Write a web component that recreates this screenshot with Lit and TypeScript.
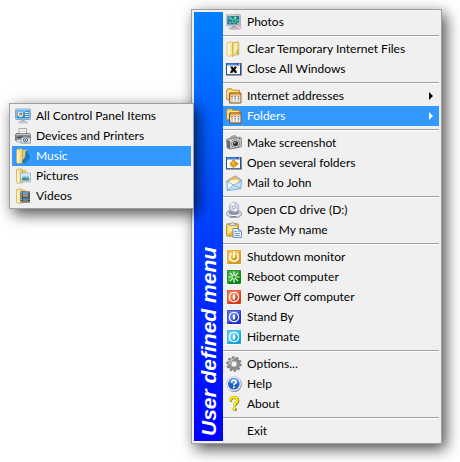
import { LitElement, html, svg, css, nothing, type TemplateResult, type SVGTemplateResult } from "lit";
import { customElement, property } from "lit/decorators.js";
import { classMap } from "lit/directives/class-map.js";

const powerTile = (light: string, dark: string, glyph: SVGTemplateResult) => svg`
  <rect x="0.5" y="0.5" width="15" height="15" rx="1.5" fill="#ffffff"/>
  <rect x="1" y="1" width="14" height="14" rx="1" fill=${dark}/>
  <path d="M1.5 2q0-.5.5-.5h12.5L1.5 14z" fill=${light}/>
  <path d="M14.5 1.5L1.5 14.5h1L14.5 5z" fill=${light} opacity=".55"/>
  ${glyph}`;

const zeroGlyph = svg`
  <circle cx="8" cy="8" r="4.6" fill="none" stroke="#fff" stroke-width="1.4"/>
  <rect x="7" y="5.5" width="2" height="5" rx="1" fill="#fff" stroke="#fff" stroke-width=".4"/>`;

const folderBody = svg`
  <path d="M1.500 1.500l5-.8 1 1v13l-5 .8-1-1.500z" fill="#f0d98c" stroke="#d0ae55" stroke-width=".7"/>
  <path d="M2 2l2.500.8v12.400L2 14z" fill="#fff0b8"/>
  <path d="M7.300 2.200l4.200-.4v3l-4.200 9.500z" fill="#e8cb70"/>
  <path d="M7.500 1.500v13.200" stroke="#b8923a" stroke-width=".6"/>`;

const menuFolder = svg`
  <path d="M.7 11V2.200L1.500.8h4.200l1 1.400h6.800v3H3.200V12H1.500z" fill="#f8d568" stroke="#b07a18" stroke-width=".8"/>
  <path d="M1.500 3.200h11.300v1H2.800v6.500H1.500z" fill="#ffeaa0"/>
  <path d="M3.200 5.600q0-1 1-1h10q1.200 0 1.200 1v8.800q0 1-1 1H4.200q-1 0-1-1z" fill="#7a4a14"/>
  <path d="M4 6q0-.7.7-.7H14q.7 0 .7.700v1.200H4z" fill="#e9a63c"/>
  <path d="M4.200 7.300h10.300v7.200H4.200z" fill="#fbf6e8"/>
  <path d="M5.200 8h1.600v1.400H5.200z" fill="#c55a3a"/>
  <path d="M8.400 8H10v1.400H8.400z" fill="#5f88c8"/>
  <path d="M11.700 8h1.600v1.400h-1.600z" fill="#d65a48"/>
  <path d="M5.200 10.200h1.600v1.400H5.200z" fill="#e08a70"/>
  <path d="M8.400 10.200H10v1.400H8.400z" fill="#48a058"/>
  <path d="M11.700 10.200h1.600v1.400h-1.600z" fill="#4878c8"/>
  <path d="M5.200 12.400h1.600v1.400H5.200zM8.400 12.400H10v1.400H8.400zM11.700 12.400h1.600v1.400h-1.600z" fill="#a9a9a0"/>`;

const windowFrame = svg`
  <rect x="0" y="2" width="16" height="12.800" fill="#8c8c88"/>
  <rect x="0" y="2" width="15" height="12" fill="#1c4c9c"/>
  <rect x="1" y="2.600" width="10" height="1.200" fill="#5b9cf0"/>
  <rect x="12.600" y="2.600" width="1.600" height="1.200" fill="#e8edf8"/>
  <rect x="1" y="4.400" width="13" height="8.800" fill="#fffef6"/>`;

const icons: Record<string, SVGTemplateResult> = {
  photos: svg`
    <path d="M0 1l13.500-.6q1 0 1 1v10.400H.8Q0 11.800 0 11z" fill="#d9dcdc" stroke="#969c9c" stroke-width=".7"/>
    <path d="M1.300 2.200l12-.4v8.800h-12z" fill="#26758c"/>
    <path d="M1.300 2.200h4L1.300 7z" fill="#5b9dbc"/>
    <circle cx="5" cy="4.500" r="1.500" fill="#4ac69e"/><circle cx="9.300" cy="3.700" r="1.300" fill="#8ee8c8"/>
    <circle cx="8" cy="7.200" r="1.800" fill="none" stroke="#5bdcb0" stroke-width="1"/>
    <circle cx="11.500" cy="6.200" r="1.300" fill="#3fb67e"/><circle cx="4" cy="8.500" r="1" fill="#79d8f0"/>
    <circle cx="12" cy="9.300" r=".9" fill="#a0f0a8"/>
    <path d="M6 12h4l.5 1.700h-5z" fill="#a4a8a8"/>
    <path d="M3.300 14q4.500-1 9 0v1q-4.500.8-9 0z" fill="#c8cccc" stroke="#8c9090" stroke-width=".5"/>
    <path d="M13.500 11.500l1.800 2-1.800 2-2-2z" fill="#f5c8f4" stroke="#e07ae0" stroke-width=".7"/>`,
  folder: svg`
    <path d="M1 2l4.500-1.400L7 2v12.500l-5 .8-1-1.300z" fill="#f6e6a6" stroke="#d8bb62" stroke-width=".7"/>
    <path d="M2 2.600l1.600-.4v12l-1.600.2z" fill="#fffbe0"/>
    <path d="M6.500 1.800l5.700-1q.6 0 .6.800v11l-6.300 2.800z" fill="#ecd37c" stroke="#cba94e" stroke-width=".7"/>
    <path d="M8 2.600l3-.5v7L8 13z" fill="#f9eaae"/>
    <path d="M10.800 8.500l2.200-1v5.800l-2.200 1z" fill="#d8b24a"/>
    <path d="M12.500 11.500v3" stroke="#72b8cc" stroke-width=".8"/>`,
  closeWin: svg`${windowFrame}
    <path d="M4.500 5.500h2l1 1.500 1-1.500h2v1.200L9.200 8.600l1.500 2v1.400h-2l-1.200-1.700L6.300 12h-2v-1.400l1.500-2-1.300-1.900z" fill="#101010"/>`,
  menuFolder,
  camera: svg`
    <path d="M4 3.500L5.500 1.200l4-.6 1.500 2z" fill="#b8b8b8" stroke="#707070" stroke-width=".6"/>
    <path d="M.6 5.200q0-1.200 1-1.400l12-1.600q1.700-.1 1.800 1.300l.2 7.300q0 1-1 1.300L4 14.200 1 12.800z" fill="#bcbcbc" stroke="#727272" stroke-width=".7"/>
    <path d="M1 5l3 .9v8L1.200 12.500z" fill="#686868"/>
    <path d="M4 5.600l10.500-1.800v1.500L4 7z" fill="#e8e8e8"/>
    <circle cx="9.500" cy="8.600" r="4" fill="#e2e2e2" stroke="#5c5c5c" stroke-width=".7"/>
    <circle cx="9.500" cy="8.600" r="2.600" fill="#303030"/>
    <circle cx="8.800" cy="7.800" r=".9" fill="#b0b8c4"/>
    <rect x="12.500" y="3.200" width="1.800" height="1.200" fill="#555"/>`,
  severalWin: svg`${windowFrame}
    <path d="M6.500 5h2v2.600h1V6.500l3 2.200-1.200 1-1.200-.7.4 1.600-3 2-3-2.200 1.200-.8-2-1.200 1.800-1.500 1 .8z" fill="#e8a21c" stroke="#a86408" stroke-width=".5"/>
    <path d="M7.200 5.500v3.800" stroke="#ffe27c" stroke-width=".8"/>`,
  mail: svg`
    <path d="M.8 6L9 .8 15.500 5l-.8 8.500L1.300 15.600z" fill="#8cb4e0" stroke="#6a94c4" stroke-width=".7"/>
    <path d="M2 5.700L8.800 1.300l5.800 3.900L9.200 10z" fill="#f8b850"/>
    <path d="M4 5.700l6.500-1.400 3 1.200L9 10 3 7.500z" fill="#fff6d8"/>
    <path d="M1 6.500l6.500 3.700L15.400 6l-.7 7.500L1.500 15.500z" fill="#c3e3f8" stroke="#7ba8d4" stroke-width=".6"/>
    <path d="M1.500 15.300l5.800-5 7.300 3" fill="none" stroke="#74a8d8" stroke-width=".8"/>
    <path d="M2 14l4.500-4L2 7.500z" fill="#eaf7ff"/>`,
  cd: svg`
    <path d="M.6 10.500L4 8h8.500l3 2.800v2.400L12 15.500H4l-3.400-2.800z" fill="#c4c6d0" stroke="#858894" stroke-width=".7"/>
    <path d="M1 11l3.500 2.500h7.600L15 11.300" fill="none" stroke="#fafafa" stroke-width="1"/>
    <ellipse cx="7.800" cy="10.600" rx="5" ry="2.300" fill="#8e92a4"/>
    <circle cx="8" cy="5.200" r="4.700" fill="#d4d8ec" stroke="#8a90a8" stroke-width=".7"/>
    <path d="M8 5.200L4.500 2.200A4.500 4.500 0 0 1 8 .7z" fill="#fff"/>
    <path d="M8 5.200l3.500 3A4.500 4.500 0 0 1 8 9.700z" fill="#f4f6ff"/>
    <circle cx="8" cy="5.200" r="1.500" fill="#f5f5f5" stroke="#7c84a0" stroke-width=".6"/>
    <path d="M5 14.500h5" stroke="#626678" stroke-width=".7"/>`,
  paste: svg`
    <path d="M.6 2.800q0-1 1-1h9.800q1 0 1 1v10.400q0 1-1 1H1.600q-1 0-1-1z" fill="#eeb82e" stroke="#a87c1c" stroke-width=".8"/>
    <path d="M1.500 3h9v2.500l-9 7z" fill="#ffe48a"/>
    <path d="M3.500 3.500V2l1.500-.5Q5.300.4 6.500.4t1.500 1.100l1.500.5v1.500z" fill="#d8dce4" stroke="#707888" stroke-width=".6"/>
    <path d="M7 6.500h5.500l3 2.800v6.200H7z" fill="#f2f7ff" stroke="#4a78c0" stroke-width=".8"/>
    <path d="M12.500 6.500v2.800h3" fill="#b4cff4" stroke="#4a78c0" stroke-width=".6"/>
    <path d="M8.500 9.500h2.800M8.500 11.500h5.300M8.500 13.500h5.300" stroke="#5b87cc" stroke-width=".9"/>`,
  shutdown: powerTile("#efc24a", "#d39a1c", svg`
    <path d="M5.300 4.700a4.300 4.300 0 1 0 5.400 0" fill="none" stroke="#fff" stroke-width="1.500" stroke-linecap="round"/>
    <path d="M8 2.800v5.400" stroke="#fff" stroke-width="1.600" stroke-linecap="round"/>`),
  reboot: powerTile("#3fae3c", "#0c8412", svg`
    <path d="M8 2.800v3.400M8 9.800v3.400M2.800 8h3.400M9.800 8h3.400M4.300 4.300l2.400 2.400M9.300 9.300l2.400 2.400M11.700 4.300L9.300 6.700M6.700 9.300l-2.400 2.400" stroke="#f0fff0" stroke-width="1.200" stroke-linecap="round"/>`),
  poweroff: powerTile("#f47a54", "#da3a16", zeroGlyph),
  standby: powerTile("#5a72ee", "#1c2ecc", zeroGlyph),
  hibernate: powerTile("#5ccdf4", "#12a2da", zeroGlyph),
  gear: svg`
    <circle cx="8" cy="8" r="6.700" fill="none" stroke="#777" stroke-width="2" stroke-dasharray="2.300 1.900"/>
    <circle cx="8" cy="8" r="4.900" fill="none" stroke="#8c8c8c" stroke-width="3.200"/>
    <path d="M3.200 8A4.800 4.800 0 0 1 8 3.200" fill="none" stroke="#bdbdbd" stroke-width="1.800"/>
    <circle cx="8" cy="8" r="3.100" fill="#f4f4f4" stroke="#6a6a6a" stroke-width=".6"/>`,
  help: svg`
    <circle cx="8.400" cy="8.500" r="7.400" fill="#7c8698"/>
    <circle cx="7.800" cy="7.800" r="7.300" fill="#eef4fc" stroke="#a0b0c6" stroke-width=".5"/>
    <circle cx="7.800" cy="7.800" r="5.800" fill="#1f5fc4"/>
    <path d="M2.600 6.500a5.300 5.300 0 0 1 10.400 0Q8 9.500 2.600 6.500z" fill="#5592e6"/>
    <path d="M5.700 6.300q0-2.200 2.200-2.200T10 6q0 1-1.100 1.700-1 .6-1 1.500" fill="none" stroke="#fff" stroke-width="1.600"/>
    <circle cx="7.900" cy="11.200" r="1" fill="#fff"/>`,
  about: svg`
    <path d="M4.900 5.800Q4.700 2 8.400 1.900t3.900 3q0 1.500-1.700 2.700-1.400 1-1.300 2.900" fill="none" stroke="#707070" stroke-width="2.200"/>
    <rect x="8" y="12.300" width="2.800" height="2.800" rx="1" fill="#707070"/>
    <path d="M4.200 5.300Q4 1.500 7.700 1.400t3.800 3q0 1.500-1.700 2.700-1.400 1-1.300 2.900" fill="none" stroke="#b89a00" stroke-width="2.600"/>
    <path d="M4.200 5.300Q4 1.500 7.700 1.400t3.800 3q0 1.500-1.700 2.700-1.400 1-1.300 2.900" fill="none" stroke="#fff200" stroke-width="1.800"/>
    <circle cx="8.300" cy="13" r="1.600" fill="#fff200" stroke="#b89a00" stroke-width=".5"/>`,
  panel: svg`
    <rect x=".5" y="1" width="15" height="10.500" rx="1" fill="#d9eaf8" stroke="#6c94b8" stroke-width=".8"/>
    <rect x="1.500" y="2" width="13" height="8.500" fill="#2f8ad0"/>
    <path d="M1.500 2h13L1.500 8z" fill="#6cb6ec"/>
    <circle cx="5.500" cy="6.300" r="2.600" fill="#fff"/>
    <circle cx="5.500" cy="6.300" r="1.800" fill="#f29a2e"/>
    <path d="M5.500 6.300V4.500a1.800 1.800 0 0 1 1.800 1.800z" fill="#2a6cb8"/>
    <path d="M10 4.500h3.500M10 6.500h3.500M10 8.500h3.500" stroke="#fff" stroke-width="1"/>
    <path d="M6.500 11.500h3l.5 2H6z" fill="#a8b4c0"/>
    <path d="M4 13.500h8.500v1.500H4z" fill="#d6dce4" stroke="#98a4b0" stroke-width=".5"/>`,
  printer: svg`
    <path d="M4 .5h7.500V6H4z" fill="#fff" stroke="#8c8c8c" stroke-width=".7"/>
    <path d="M5 2h5.500M5 3.500h5.500" stroke="#c8ccd0" stroke-width=".7"/>
    <path d="M.6 7q0-1.500 1.500-1.500h11.500q1.700 0 1.700 1.500v5.500H.6z" fill="#84888c" stroke="#505458" stroke-width=".7"/>
    <path d="M1.200 7q4-1.500 13.400-.3" fill="none" stroke="#e0e2e4" stroke-width="1"/>
    <path d="M2.500 8.700h10v1.300h-10z" fill="#3c4044"/>
    <path d="M1.500 11.500h5v3l-5-.8z" fill="#e6e8ea" stroke="#888" stroke-width=".5"/>
    <path d="M6 9.800h2l.6-1.200h3.200l.6 1.200h2.900v5.400H6z" fill="#dfe5ea" stroke="#6c7880" stroke-width=".6"/>
    <circle cx="10.500" cy="12" r="2.100" fill="#f8fafc" stroke="#384858" stroke-width=".8"/>
    <circle cx="10.500" cy="12" r="1" fill="#2c6aa4"/>`,
  music: svg`${folderBody}
    <path d="M10.800 3.500v7.600q-1-.4-2.200.4-1.400 1.200-.8 2.600.9 1.300 2.700.5 1.700-.9 1.600-2.600V7.700q1.800 1.200 1.300 3.900 2.100-2.900.1-5.100-1.300-1.200-1.400-3z" fill="#1c80bc" stroke="#0f5c8c" stroke-width=".5"/>`,
  pictures: svg`${folderBody}
    <rect x="5.500" y="5" width="10" height="8.800" fill="#fff" stroke="#8e9aa4" stroke-width=".7"/>
    <rect x="6.700" y="6.200" width="7.600" height="6.300" fill="#8cc8ee"/>
    <path d="M6.700 12.500v-2l2.500-1.800 2 1.500 1.500-.8 1.600 1.400v1.700z" fill="#4c8c7c"/>
    <path d="M6.700 6.200h7.600v1.500l-7.600 1z" fill="#c8e8fa"/>`,
  videos: svg`${folderBody}
    <rect x="5.500" y="3.500" width="9.500" height="11" fill="#343a42"/>
    <rect x="7.500" y="4" width="5.500" height="4.700" fill="#58a0d4"/>
    <path d="M7.500 8.700l2.500-3 3 2v1z" fill="#d08830"/>
    <rect x="7.500" y="9.600" width="5.500" height="4.500" fill="#4488c0"/>
    <path d="M7.500 14.100l3-3 2.500 1.800v1.200z" fill="#a07838"/>
    <path d="M6.500 4.200v10M14 4.200v10" stroke="#dfe5ea" stroke-width=".9" stroke-dasharray="1.100 1.100"/>`,
};

interface Entry {
  label: string;
  icon?: string;
  children?: Entry[];
  arrow?: boolean;
  active?: boolean;
}

const groups: Entry[][] = [
  [{ label: "Photos", icon: "photos" }],
  [
    { label: "Clear Temporary Internet Files", icon: "folder" },
    { label: "Close All Windows", icon: "closeWin" },
  ],
  [
    { label: "Internet addresses", icon: "menuFolder", arrow: true },
    {
      label: "Folders",
      icon: "menuFolder",
      arrow: true,
      active: true,
      children: [
        { label: "All Control Panel Items", icon: "panel" },
        { label: "Devices and Printers", icon: "printer" },
        { label: "Music", icon: "music", active: true },
        { label: "Pictures", icon: "pictures" },
        { label: "Videos", icon: "videos" },
      ],
    },
  ],
  [
    { label: "Make screenshot", icon: "camera" },
    { label: "Open several folders", icon: "severalWin" },
    { label: "Mail to John", icon: "mail" },
  ],
  [
    { label: "Open CD drive (D:)", icon: "cd" },
    { label: "Paste My name", icon: "paste" },
  ],
  [
    { label: "Shutdown monitor", icon: "shutdown" },
    { label: "Reboot computer", icon: "reboot" },
    { label: "Power Off computer", icon: "poweroff" },
    { label: "Stand By", icon: "standby" },
    { label: "Hibernate", icon: "hibernate" },
  ],
  [
    { label: "Options...", icon: "gear" },
    { label: "Help", icon: "help" },
    { label: "About", icon: "about" },
  ],
  [{ label: "Exit" }],
];

@customElement("menu-entry")
class MenuEntry extends LitElement {
  @property({ attribute: false }) entry!: Entry;

  static styles = css`
    :host {
      display: block;
      position: relative;
    }
    .row {
      display: flex;
      align-items: center;
      gap: 5px;
      width: 100%;
      height: 20px;
      margin: 0;
      padding: 0 6px 0 3px;
      border: 0;
      background: none;
      color: #000;
      font: 12px/20px Lato, "Open Sans", sans-serif;
      text-align: left;
      white-space: nowrap;
    }
    .row.active {
      background: #3399ff;
      color: #fff;
    }
    .icon {
      flex: none;
      width: 16px;
      height: 16px;
    }
    .label {
      flex: 1;
    }
    .arrow {
      flex: none;
      width: 4px;
      height: 8px;
      fill: currentColor;
    }
    .submenu {
      position: absolute;
      z-index: 1;
      top: -3px;
      right: calc(100% + 29px);
      box-sizing: border-box;
      width: 185px;
      padding: 2px;
      border: 1px solid #a0a0a0;
      background: #f0f0f0;
      box-shadow: 4px 5px 14px rgba(0, 0, 0, 0.7);
    }
  `;

  render(): TemplateResult {
    const { label, icon, arrow, active, children } = this.entry;
    return html`
      <button class=${classMap({ row: true, active: !!active })} role="menuitem">
        <svg class="icon" viewBox="0 0 16 16" aria-hidden="true">${icon ? icons[icon] : nothing}</svg>
        <span class="label">${label}</span>
        ${arrow
          ? html`<svg class="arrow" viewBox="0 0 4 8" aria-hidden="true"><path d="M0 0l4 4-4 4z" /></svg>`
          : nothing}
      </button>
      ${children
        ? html`<div class="submenu" role="menu" aria-label=${label}>
            ${children.map((c) => html`<menu-entry .entry=${c}></menu-entry>`)}
          </div>`
        : nothing}
    `;
  }
}

@customElement("app-root")
class AppRoot extends LitElement {
  static styles = css`
    :host {
      display: block;
      padding: 9px 18px 18px 191px;
      background: #fff;
    }
    .menu {
      display: flex;
      padding: 2px;
      border: 1px solid #a0a0a0;
      background: #f0f0f0;
      box-shadow: 4px 5px 14px rgba(0, 0, 0, 0.7);
    }
    .banner {
      flex: none;
      box-sizing: border-box;
      width: 29px;
      padding-top: 5px;
      background: linear-gradient(to top, #0080ff, #0000ff);
      color: #fff;
      font: italic bold 21px/29px "Liberation Sans", Arial, sans-serif;
      white-space: nowrap;
      writing-mode: vertical-rl;
      transform: rotate(180deg);
    }
    .groups {
      flex: 1;
      min-width: 0;
    }
    .line {
      height: 1px;
      margin: 3px 0;
      border: 0;
      background: #a0a0a0;
      box-shadow: 0 1px #fff;
    }
  `;

  render(): TemplateResult {
    return html`
      <div class="menu" role="menu" aria-label="User defined menu">
        <div class="banner">User defined menu</div>
        <div class="groups">
          ${groups.map(
            (group, i) => html`
              ${i > 0 ? html`<hr class="line" />` : nothing}
              <div class="group">${group.map((e) => html`<menu-entry .entry=${e}></menu-entry>`)}</div>
            `,
          )}
        </div>
      </div>
    `;
  }
}
